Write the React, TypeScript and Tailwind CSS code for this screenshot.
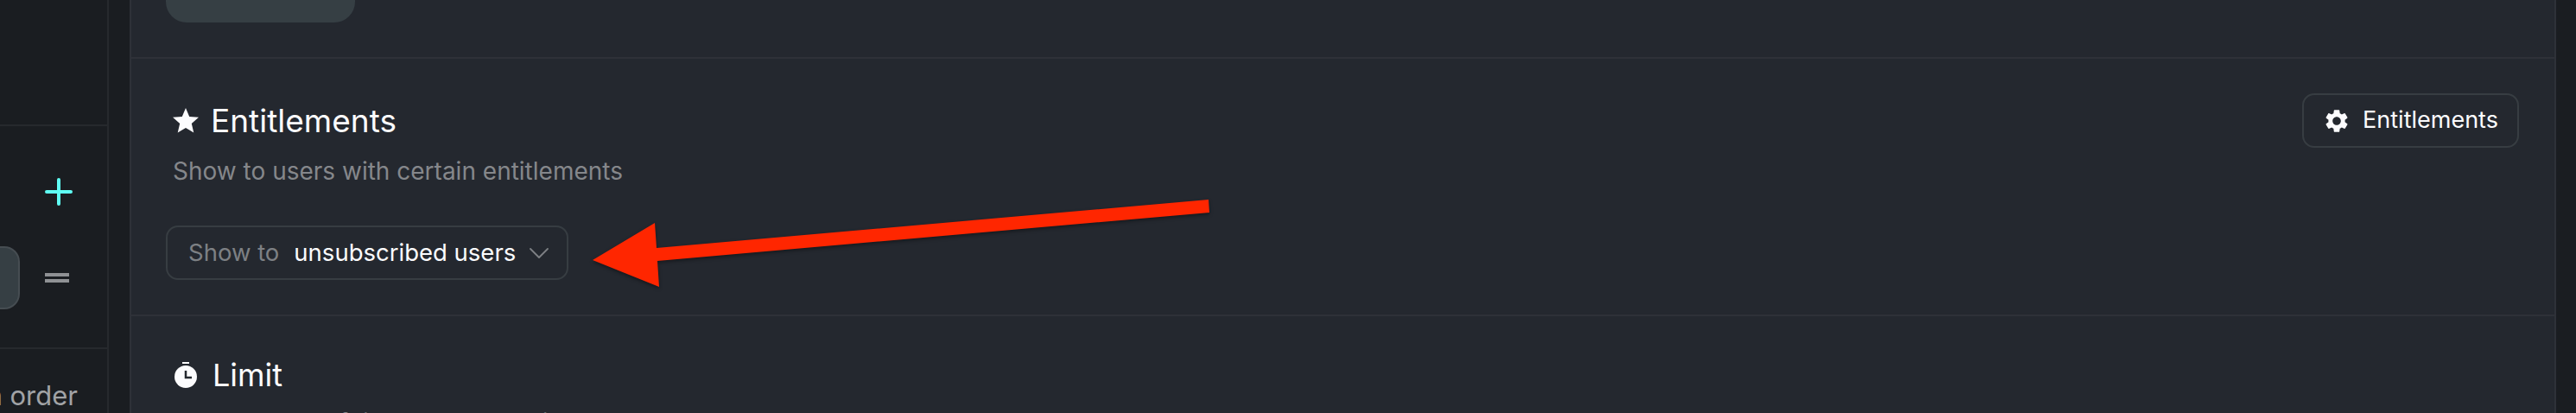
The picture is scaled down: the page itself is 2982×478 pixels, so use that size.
import { ChevronDown } from "lucide-react";
import { MdSettings, MdStar } from "react-icons/md";

export default function App() {
  return (
    <div className="relative flex h-[478px] w-[2982px] overflow-hidden bg-[#1a1d21] text-white [font-family:Inter,sans-serif]">
      <aside className="flex w-[126px] shrink-0 flex-col border-r-2 border-[#26292d] bg-[#1a1d21]">
        <div className="h-[146px] shrink-0 border-b-2 border-[#26292d]" />
        <div className="flex h-[258px] shrink-0 flex-col border-b-2 border-[#26292d]">
          <div className="flex h-[139px] items-start justify-end pr-[40px] pt-[60px]">
            <svg width="32" height="32" viewBox="0 0 32 32" fill="none" stroke="#5ffdf3" strokeWidth="4" strokeLinecap="round">
              <path d="M16 2v28M2 16h28" />
            </svg>
          </div>
          <div className="flex items-center">
            <div className="h-[73px] w-[23px] rounded-r-[18px] border-2 border-l-0 border-[#464d52] bg-[#363f44]" />
            <div className="ml-[29px] flex w-[28px] flex-col gap-[3px]">
              <div className="h-[4px] bg-[#8f9194]" />
              <div className="h-[4px] bg-[#8f9194]" />
            </div>
          </div>
        </div>
        <div className="flex justify-end whitespace-nowrap pt-[36px] pr-[34px] text-[31px] leading-[36px] text-[#a1a3a6]">a order</div>
      </aside>
      <div className="w-[24px] shrink-0" />
      <main className="flex w-[2809px] shrink-0 flex-col border-x-2 border-[#2e3138] bg-[#24282f]">
        <section className="h-[68px] shrink-0 border-b-2 border-[#2e3138] pl-[40px]">
          <div className="h-[26px] w-[219px] rounded-b-[24px] bg-[#363f44]" />
        </section>
        <section className="h-[298px] shrink-0 border-b-2 border-[#2e3138] pl-[40px] pr-[41px]">
          <div className="flex items-start justify-between pt-[40px]">
            <div className="pl-[8px] pt-[10px]">
              <div className="flex h-[44px] items-center gap-[11px]">
                <MdStar className="-ml-[3px] h-[36px] w-[36px] text-[#fcfcfe]" />
                <span className="text-[37px] leading-[44px] text-[#fcfcfe]">Entitlements</span>
              </div>
              <p className="mt-[18px] whitespace-nowrap text-[28px] leading-[36px] text-[#85878b]">Show to users with certain entitlements</p>
            </div>
            <button className="flex h-[63px] w-[251px] items-center justify-center gap-[14px] rounded-[14px] border-2 border-[#373d42] text-[27px] text-[#fcfcfe]">
              <MdSettings className="h-[32px] w-[32px] text-[#fcfcfe]" />
              Entitlements
            </button>
          </div>
          <div className="mt-[45px] flex h-[63px] w-[466px] items-center whitespace-nowrap rounded-[14px] border-2 border-[#373d42] pl-[24px] text-[27.5px]">
            <span className="text-[#7d8084]">Show to</span>
            <span className="ml-[17px] text-[#fcfcfe]">unsubscribed users</span>
            <ChevronDown className="ml-[7px] h-[40px] w-[40px] text-[#7d8084]" strokeWidth={1.1} />
          </div>
        </section>
        <section className="shrink-0 pl-[50px] pt-[46px]">
          <div className="flex h-[44px] items-center gap-[18px]">
            <svg width="26" height="30" viewBox="0 0 26 30" className="text-[#fcfcfe]" fill="currentColor">
              <rect x="9" y="0" width="8" height="2" />
              <circle cx="13" cy="17" r="13" />
              <path d="M13 10v8h7" fill="none" stroke="#24282f" strokeWidth="2.5" />
            </svg>
            <span className="text-[36px] leading-[44px] text-[#fcfcfe]">Limit</span>
          </div>
          <p className="mt-[15px] whitespace-nowrap text-[28px] leading-[36px] text-[#85878b]">Max number of times to show this content</p>
        </section>
      </main>
      <svg className="absolute left-0 top-0 drop-shadow-[0_2px_2px_rgba(0,0,0,0.4)]" width="2982" height="478" viewBox="0 0 2982 478" fill="none">
        <polygon points="1399,231 1400,246 761,302 763,332 686,301 758,258 760,287" fill="#ff2600" />
      </svg>
    </div>
  );
}
